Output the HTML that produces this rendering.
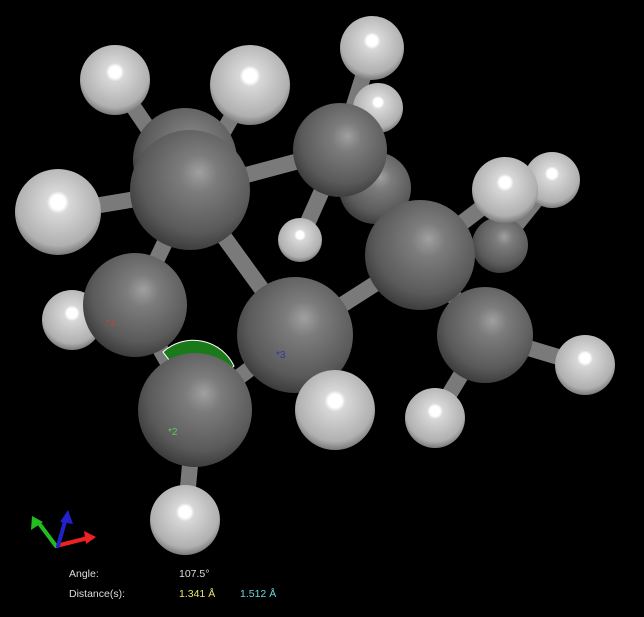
<!DOCTYPE html>
<html><head><meta charset="utf-8"><style>
html,body{margin:0;padding:0;background:#000;width:644px;height:617px;overflow:hidden}
.t{position:absolute;font-family:"Liberation Sans",sans-serif;font-size:10.5px;color:#ddd}
</style></head><body>
<svg width="644" height="617" style="position:absolute;left:0;top:0">
<defs>
<radialGradient id="c" cx="0.55" cy="0.4" r="0.62" fx="0.58" fy="0.35">
<stop offset="0" stop-color="#a0a0a0"/><stop offset="0.25" stop-color="#7c7c7c"/><stop offset="0.75" stop-color="#5a5a5a"/><stop offset="1" stop-color="#3a3a3a"/></radialGradient>
<radialGradient id="h" cx="0.5" cy="0.42" r="0.6" fx="0.5" fy="0.38">
<stop offset="0" stop-color="#ffffff"/><stop offset="0.14" stop-color="#ffffff"/><stop offset="0.22" stop-color="#d8d8d8"/><stop offset="0.8" stop-color="#b0b0b0"/><stop offset="1" stop-color="#707070"/></radialGradient>
</defs>
<g stroke="#7a7a7a" stroke-width="16" stroke-linecap="round">
<line x1="190" y1="190" x2="340" y2="150"/>
<line x1="190" y1="190" x2="295" y2="335"/>
<line x1="295" y1="335" x2="420" y2="255"/>
<line x1="340" y1="150" x2="420" y2="255"/>
<line x1="420" y1="255" x2="485" y2="335"/>
<line x1="190" y1="190" x2="135" y2="305"/>
<line x1="135" y1="305" x2="195" y2="410"/>
<line x1="195" y1="410" x2="295" y2="335"/>
<line x1="190" y1="190" x2="115" y2="80"/>
<line x1="190" y1="190" x2="250" y2="85"/>
<line x1="190" y1="190" x2="58" y2="212"/>
<line x1="340" y1="150" x2="372" y2="48"/>
<line x1="340" y1="150" x2="300" y2="240"/>
<line x1="420" y1="255" x2="505" y2="190"/>
<line x1="485" y1="335" x2="585" y2="365"/>
<line x1="485" y1="335" x2="435" y2="418"/>
<line x1="295" y1="335" x2="335" y2="410"/>
<line x1="195" y1="410" x2="185" y2="520"/>
<line x1="135" y1="305" x2="72" y2="320"/>
<line x1="500" y1="245" x2="552" y2="180"/>
</g>
<circle cx="378" cy="108" r="25" fill="url(#h)"/>
<circle cx="375" cy="188" r="36" fill="url(#c)"/>
<circle cx="500" cy="245" r="28" fill="url(#c)"/>
<circle cx="552" cy="180" r="28" fill="url(#h)"/>
<circle cx="300" cy="240" r="22" fill="url(#h)"/>
<circle cx="185" cy="160" r="52" fill="url(#c)"/>
<circle cx="115" cy="80" r="35" fill="url(#h)"/>
<circle cx="250" cy="85" r="40" fill="url(#h)"/>
<circle cx="372" cy="48" r="32" fill="url(#h)"/>
<circle cx="340" cy="150" r="47" fill="url(#c)"/>
<circle cx="190" cy="190" r="60" fill="url(#c)"/>
<circle cx="58" cy="212" r="43" fill="url(#h)"/>
<circle cx="72" cy="320" r="30" fill="url(#h)"/>
<circle cx="505" cy="190" r="33" fill="url(#h)"/>
<circle cx="420" cy="255" r="55" fill="url(#c)"/>
<circle cx="485" cy="335" r="48" fill="url(#c)"/>
<circle cx="585" cy="365" r="30" fill="url(#h)"/>
<circle cx="435" cy="418" r="30" fill="url(#h)"/>
<circle cx="135" cy="305" r="52" fill="url(#c)"/>
<path d="M163 352 A45 45 0 0 1 234 366 L200 400 Z" fill="#1a7a1a" stroke="#fff" stroke-width="1"/>
<circle cx="295" cy="335" r="58" fill="url(#c)"/>
<circle cx="335" cy="410" r="40" fill="url(#h)"/>
<circle cx="195" cy="410" r="57" fill="url(#c)"/>
<circle cx="185" cy="520" r="35" fill="url(#h)"/>
<text x="106" y="326" font-family="Liberation Sans" font-size="10" fill="#b44">*1</text>
<text x="276" y="358" font-family="Liberation Sans" font-size="10" fill="#33a">*3</text>
<text x="168" y="435" font-family="Liberation Sans" font-size="10" fill="#5c5">*2</text>
<g stroke-width="4" stroke-linecap="round">
<line x1="56" y1="546" x2="88" y2="538" stroke="#e22"/>
<line x1="56" y1="546" x2="38" y2="522" stroke="#2b2"/>
<line x1="58" y1="546" x2="66" y2="518" stroke="#22c"/>
</g>
<polygon points="96,537 84,531 86,544" fill="#e22"/>
<polygon points="32,516 31,530 43,522" fill="#2b2"/>
<polygon points="68,510 60,522 73,524" fill="#22c"/>
</svg>
<div class="t" style="left:69px;top:568px">Angle:</div>
<div class="t" style="left:179px;top:568px">107.5°</div>
<div class="t" style="left:69px;top:588px">Distance(s):</div>
<div class="t" style="left:179px;top:588px;color:#e6e66a">1.341 Å</div>
<div class="t" style="left:240px;top:588px;color:#6cd6d6">1.512 Å</div>
</body></html>
